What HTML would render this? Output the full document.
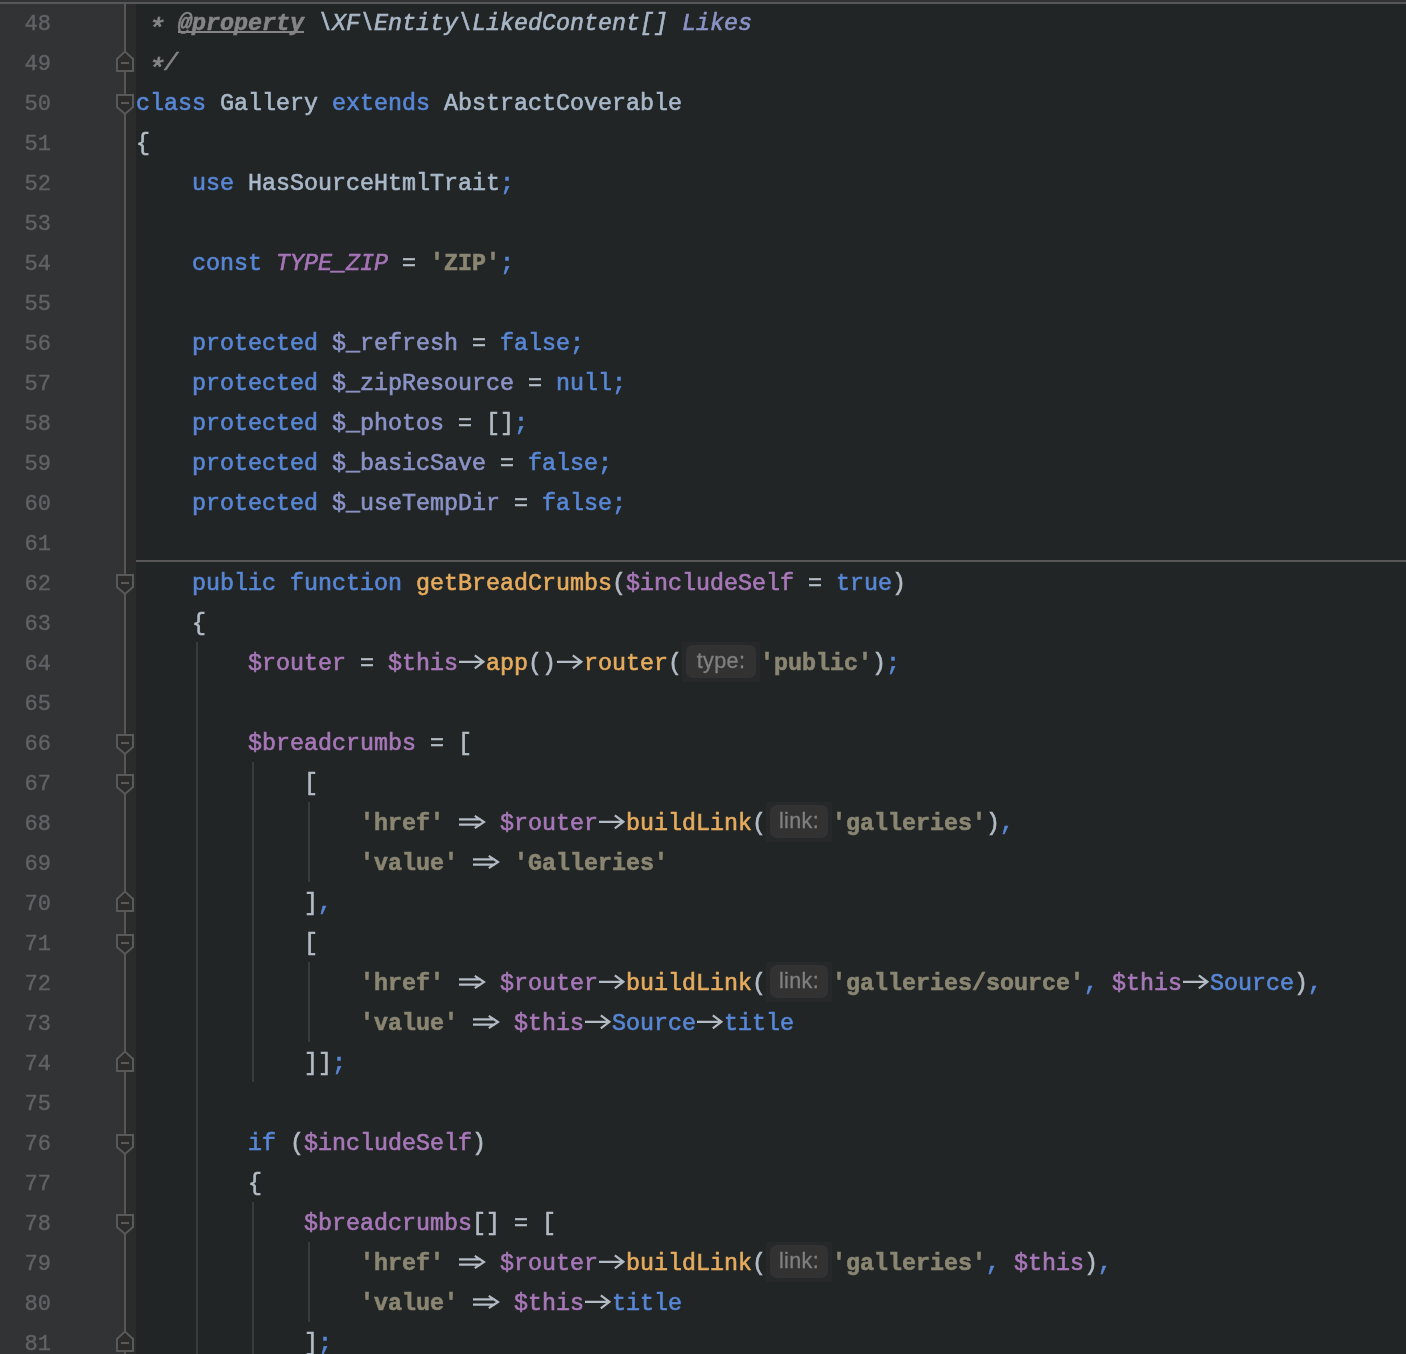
<!DOCTYPE html>
<html><head><meta charset="utf-8"><style>
html,body{margin:0;padding:0}
body{width:1406px;height:1354px;overflow:hidden;background:#222526;position:relative;font-family:"Liberation Mono",monospace;font-size:23.333px}
.a{position:absolute}
.ln{position:absolute;left:0;height:40px;line-height:40px;white-space:pre;-webkit-text-stroke:0.6px currentColor;will-change:transform}
.num{position:absolute;width:51px;font-size:22px;text-align:right;left:0;height:40px;line-height:40px;color:#606366;-webkit-text-stroke:0.4px currentColor;will-change:transform}
.kw{color:#5887d6} .id{color:#a9b9ca} .op{color:#b3bcc5} .var{color:#a878b9}
.prop{color:#8b93c7} .fn{color:#e6ac5e} .str{color:#8a8672;font-weight:bold}
.cmt{color:#858585;font-style:italic} .tag{color:#858585;font-style:italic;font-weight:bold;text-decoration:underline;text-decoration-thickness:2px;text-underline-offset:1px;text-decoration-skip-ink:none}
.doc{color:#a9b7c6;font-style:italic} .docv{color:#8b93c7;font-style:italic}
span.ast{color:#858585;font-style:italic;display:inline-block;width:14px;transform:translate(-0.5px,5.5px) scale(1.22)}
.cst{color:#a774b8;font-style:italic}
.ar{display:inline-block;vertical-align:top}
.hint{display:inline-block;vertical-align:top;height:40px;background:#272829;position:relative;top:-2px}
.hint i{position:absolute;left:4px;top:3px;bottom:4px;right:4px;background:#323233;border-radius:7px;font-style:normal;font-family:"Liberation Sans",sans-serif;font-size:21.5px;letter-spacing:0.4px;color:#808080;text-align:center;line-height:32px;-webkit-text-stroke:0.3px currentColor}
</style></head><body>

<div class="a" style="left:0;top:0;width:124px;height:1354px;background:#323335"></div>
<div class="a" style="left:126px;top:0;width:10px;height:1354px;background:#2b2b2c"></div>
<div class="a" style="left:124px;top:0;width:2px;height:1354px;background:#575757"></div>
<div class="a" style="left:0;top:0;width:1406px;height:2px;background:#323335"></div>
<div class="a" style="left:0;top:2px;width:1406px;height:2px;background:#575757"></div>
<div class="a" style="left:136px;top:560px;width:1270px;height:2px;background:#585858"></div>
<div class="a" style="left:196px;top:642px;width:2px;height:712px;background:#3a3a3a"></div>
<div class="a" style="left:252px;top:762px;width:2px;height:320px;background:#3a3a3a"></div>
<div class="a" style="left:252px;top:1202px;width:2px;height:152px;background:#3a3a3a"></div>
<div class="a" style="left:308px;top:802px;width:2px;height:80px;background:#3a3a3a"></div>
<div class="a" style="left:308px;top:962px;width:2px;height:80px;background:#3a3a3a"></div>
<div class="a" style="left:308px;top:1242px;width:2px;height:80px;background:#3a3a3a"></div>
<div class="num" style="top:4.5px">48</div>
<div class="ln" style="top:4px;left:136px"> <span class="ast">*</span> <span class="tag">@property</span> <span class="doc">\XF\Entity\LikedContent[]</span> <span class="docv">Likes</span></div>
<div class="num" style="top:44.5px">49</div>
<div class="ln" style="top:44px;left:136px"> <span class="ast">*</span><span class="cmt">/</span></div>
<div class="num" style="top:84.5px">50</div>
<div class="ln" style="top:84px;left:136px"><span class="kw">class</span> <span class="id">Gallery</span> <span class="kw">extends</span> <span class="id">AbstractCoverable</span></div>
<div class="num" style="top:124.5px">51</div>
<div class="ln" style="top:124px;left:136px"><span class="op">{</span></div>
<div class="num" style="top:164.5px">52</div>
<div class="ln" style="top:164px;left:136px">    <span class="kw">use</span> <span class="id">HasSourceHtmlTrait</span><span class="kw">;</span></div>
<div class="num" style="top:204.5px">53</div>
<div class="ln" style="top:204px;left:136px"></div>
<div class="num" style="top:244.5px">54</div>
<div class="ln" style="top:244px;left:136px">    <span class="kw">const</span> <span class="cst">TYPE_ZIP</span> <span class="op">=</span> <span class="str">&#x27;ZIP&#x27;</span><span class="kw">;</span></div>
<div class="num" style="top:284.5px">55</div>
<div class="ln" style="top:284px;left:136px"></div>
<div class="num" style="top:324.5px">56</div>
<div class="ln" style="top:324px;left:136px">    <span class="kw">protected</span> <span class="prop">$_refresh</span> <span class="op">=</span> <span class="kw">false</span><span class="kw">;</span></div>
<div class="num" style="top:364.5px">57</div>
<div class="ln" style="top:364px;left:136px">    <span class="kw">protected</span> <span class="prop">$_zipResource</span> <span class="op">=</span> <span class="kw">null</span><span class="kw">;</span></div>
<div class="num" style="top:404.5px">58</div>
<div class="ln" style="top:404px;left:136px">    <span class="kw">protected</span> <span class="prop">$_photos</span> <span class="op">=</span> <span class="op">[]</span><span class="kw">;</span></div>
<div class="num" style="top:444.5px">59</div>
<div class="ln" style="top:444px;left:136px">    <span class="kw">protected</span> <span class="prop">$_basicSave</span> <span class="op">=</span> <span class="kw">false</span><span class="kw">;</span></div>
<div class="num" style="top:484.5px">60</div>
<div class="ln" style="top:484px;left:136px">    <span class="kw">protected</span> <span class="prop">$_useTempDir</span> <span class="op">=</span> <span class="kw">false</span><span class="kw">;</span></div>
<div class="num" style="top:524.5px">61</div>
<div class="ln" style="top:524px;left:136px"></div>
<div class="num" style="top:564.5px">62</div>
<div class="ln" style="top:564px;left:136px">    <span class="kw">public</span> <span class="kw">function</span> <span class="fn">getBreadCrumbs</span><span class="op">(</span><span class="var">$includeSelf</span> <span class="op">=</span> <span class="kw">true</span><span class="op">)</span></div>
<div class="num" style="top:604.5px">63</div>
<div class="ln" style="top:604px;left:136px">    <span class="op">{</span></div>
<div class="num" style="top:644.5px">64</div>
<div class="ln" style="top:644px;left:136px">        <span class="var">$router</span> <span class="op">=</span> <span class="var">$this</span><svg class="ar" width="28" height="40" viewBox="0 0 28 40"><path d="M1 17.8H25M16.8 11.3L25.4 17.8L16.8 24.3" fill="none" stroke="#b3bcc5" stroke-width="2.2"/></svg><span class="fn">app</span><span class="op">()</span><svg class="ar" width="28" height="40" viewBox="0 0 28 40"><path d="M1 17.8H25M16.8 11.3L25.4 17.8L16.8 24.3" fill="none" stroke="#b3bcc5" stroke-width="2.2"/></svg><span class="fn">router</span><span class="op">(</span><span class="hint" style="width:78px"><i>type:</i></span><span class="str">&#x27;public&#x27;</span><span class="op">)</span><span class="kw">;</span></div>
<div class="num" style="top:684.5px">65</div>
<div class="ln" style="top:684px;left:136px"></div>
<div class="num" style="top:724.5px">66</div>
<div class="ln" style="top:724px;left:136px">        <span class="var">$breadcrumbs</span> <span class="op">=</span> <span class="op">[</span></div>
<div class="num" style="top:764.5px">67</div>
<div class="ln" style="top:764px;left:136px">            <span class="op">[</span></div>
<div class="num" style="top:804.5px">68</div>
<div class="ln" style="top:804px;left:136px">                <span class="str">&#x27;href&#x27;</span> <svg class="ar" width="28" height="40" viewBox="0 0 28 40"><path d="M1 15.3H23M1 20.6H23M16.8 11.8L26 18L16.8 24.2" fill="none" stroke="#b3bcc5" stroke-width="2.2"/></svg> <span class="var">$router</span><svg class="ar" width="28" height="40" viewBox="0 0 28 40"><path d="M1 17.8H25M16.8 11.3L25.4 17.8L16.8 24.3" fill="none" stroke="#b3bcc5" stroke-width="2.2"/></svg><span class="fn">buildLink</span><span class="op">(</span><span class="hint" style="width:66px"><i>link:</i></span><span class="str">&#x27;galleries&#x27;</span><span class="op">)</span><span class="kw">,</span></div>
<div class="num" style="top:844.5px">69</div>
<div class="ln" style="top:844px;left:136px">                <span class="str">&#x27;value&#x27;</span> <svg class="ar" width="28" height="40" viewBox="0 0 28 40"><path d="M1 15.3H23M1 20.6H23M16.8 11.8L26 18L16.8 24.2" fill="none" stroke="#b3bcc5" stroke-width="2.2"/></svg> <span class="str">&#x27;Galleries&#x27;</span></div>
<div class="num" style="top:884.5px">70</div>
<div class="ln" style="top:884px;left:136px">            <span class="op">]</span><span class="kw">,</span></div>
<div class="num" style="top:924.5px">71</div>
<div class="ln" style="top:924px;left:136px">            <span class="op">[</span></div>
<div class="num" style="top:964.5px">72</div>
<div class="ln" style="top:964px;left:136px">                <span class="str">&#x27;href&#x27;</span> <svg class="ar" width="28" height="40" viewBox="0 0 28 40"><path d="M1 15.3H23M1 20.6H23M16.8 11.8L26 18L16.8 24.2" fill="none" stroke="#b3bcc5" stroke-width="2.2"/></svg> <span class="var">$router</span><svg class="ar" width="28" height="40" viewBox="0 0 28 40"><path d="M1 17.8H25M16.8 11.3L25.4 17.8L16.8 24.3" fill="none" stroke="#b3bcc5" stroke-width="2.2"/></svg><span class="fn">buildLink</span><span class="op">(</span><span class="hint" style="width:66px"><i>link:</i></span><span class="str">&#x27;galleries/source&#x27;</span><span class="kw">,</span> <span class="var">$this</span><svg class="ar" width="28" height="40" viewBox="0 0 28 40"><path d="M1 17.8H25M16.8 11.3L25.4 17.8L16.8 24.3" fill="none" stroke="#b3bcc5" stroke-width="2.2"/></svg><span class="kw">Source</span><span class="op">)</span><span class="kw">,</span></div>
<div class="num" style="top:1004.5px">73</div>
<div class="ln" style="top:1004px;left:136px">                <span class="str">&#x27;value&#x27;</span> <svg class="ar" width="28" height="40" viewBox="0 0 28 40"><path d="M1 15.3H23M1 20.6H23M16.8 11.8L26 18L16.8 24.2" fill="none" stroke="#b3bcc5" stroke-width="2.2"/></svg> <span class="var">$this</span><svg class="ar" width="28" height="40" viewBox="0 0 28 40"><path d="M1 17.8H25M16.8 11.3L25.4 17.8L16.8 24.3" fill="none" stroke="#b3bcc5" stroke-width="2.2"/></svg><span class="kw">Source</span><svg class="ar" width="28" height="40" viewBox="0 0 28 40"><path d="M1 17.8H25M16.8 11.3L25.4 17.8L16.8 24.3" fill="none" stroke="#b3bcc5" stroke-width="2.2"/></svg><span class="kw">title</span></div>
<div class="num" style="top:1044.5px">74</div>
<div class="ln" style="top:1044px;left:136px">            <span class="op">]]</span><span class="kw">;</span></div>
<div class="num" style="top:1084.5px">75</div>
<div class="ln" style="top:1084px;left:136px"></div>
<div class="num" style="top:1124.5px">76</div>
<div class="ln" style="top:1124px;left:136px">        <span class="kw">if</span> <span class="op">(</span><span class="var">$includeSelf</span><span class="op">)</span></div>
<div class="num" style="top:1164.5px">77</div>
<div class="ln" style="top:1164px;left:136px">        <span class="op">{</span></div>
<div class="num" style="top:1204.5px">78</div>
<div class="ln" style="top:1204px;left:136px">            <span class="var">$breadcrumbs</span><span class="op">[]</span> <span class="op">=</span> <span class="op">[</span></div>
<div class="num" style="top:1244.5px">79</div>
<div class="ln" style="top:1244px;left:136px">                <span class="str">&#x27;href&#x27;</span> <svg class="ar" width="28" height="40" viewBox="0 0 28 40"><path d="M1 15.3H23M1 20.6H23M16.8 11.8L26 18L16.8 24.2" fill="none" stroke="#b3bcc5" stroke-width="2.2"/></svg> <span class="var">$router</span><svg class="ar" width="28" height="40" viewBox="0 0 28 40"><path d="M1 17.8H25M16.8 11.3L25.4 17.8L16.8 24.3" fill="none" stroke="#b3bcc5" stroke-width="2.2"/></svg><span class="fn">buildLink</span><span class="op">(</span><span class="hint" style="width:66px"><i>link:</i></span><span class="str">&#x27;galleries&#x27;</span><span class="kw">,</span> <span class="var">$this</span><span class="op">)</span><span class="kw">,</span></div>
<div class="num" style="top:1284.5px">80</div>
<div class="ln" style="top:1284px;left:136px">                <span class="str">&#x27;value&#x27;</span> <svg class="ar" width="28" height="40" viewBox="0 0 28 40"><path d="M1 15.3H23M1 20.6H23M16.8 11.8L26 18L16.8 24.2" fill="none" stroke="#b3bcc5" stroke-width="2.2"/></svg> <span class="var">$this</span><svg class="ar" width="28" height="40" viewBox="0 0 28 40"><path d="M1 17.8H25M16.8 11.3L25.4 17.8L16.8 24.3" fill="none" stroke="#b3bcc5" stroke-width="2.2"/></svg><span class="kw">title</span></div>
<div class="num" style="top:1324.5px">81</div>
<div class="ln" style="top:1324px;left:136px">            <span class="op">]</span><span class="kw">;</span></div>
<svg class="a" style="left:0;top:0" width="1406" height="1354"><path d="M117 71H133V59L125 51.5L117 59Z" fill="#2b2b2b" stroke="#595959" stroke-width="2"/><rect x="121" y="62" width="8" height="2" fill="#595959"/><path d="M117 95H133V107L125 114L117 107Z" fill="#2b2b2b" stroke="#595959" stroke-width="2"/><rect x="121" y="102" width="8" height="2" fill="#595959"/><path d="M117 575H133V587L125 594L117 587Z" fill="#2b2b2b" stroke="#595959" stroke-width="2"/><rect x="121" y="582" width="8" height="2" fill="#595959"/><path d="M117 735H133V747L125 754L117 747Z" fill="#2b2b2b" stroke="#595959" stroke-width="2"/><rect x="121" y="742" width="8" height="2" fill="#595959"/><path d="M117 775H133V787L125 794L117 787Z" fill="#2b2b2b" stroke="#595959" stroke-width="2"/><rect x="121" y="782" width="8" height="2" fill="#595959"/><path d="M117 911H133V899L125 891.5L117 899Z" fill="#2b2b2b" stroke="#595959" stroke-width="2"/><rect x="121" y="902" width="8" height="2" fill="#595959"/><path d="M117 935H133V947L125 954L117 947Z" fill="#2b2b2b" stroke="#595959" stroke-width="2"/><rect x="121" y="942" width="8" height="2" fill="#595959"/><path d="M117 1071H133V1059L125 1051.5L117 1059Z" fill="#2b2b2b" stroke="#595959" stroke-width="2"/><rect x="121" y="1062" width="8" height="2" fill="#595959"/><path d="M117 1135H133V1147L125 1154L117 1147Z" fill="#2b2b2b" stroke="#595959" stroke-width="2"/><rect x="121" y="1142" width="8" height="2" fill="#595959"/><path d="M117 1215H133V1227L125 1234L117 1227Z" fill="#2b2b2b" stroke="#595959" stroke-width="2"/><rect x="121" y="1222" width="8" height="2" fill="#595959"/><path d="M117 1351H133V1339L125 1331.5L117 1339Z" fill="#2b2b2b" stroke="#595959" stroke-width="2"/><rect x="121" y="1342" width="8" height="2" fill="#595959"/></svg>
</body></html>
